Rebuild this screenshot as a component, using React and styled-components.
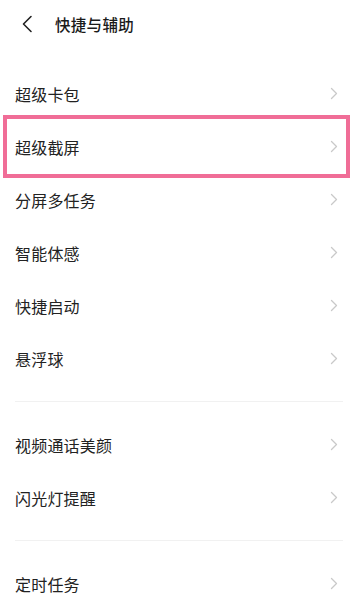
import React from 'react';
import styled, { createGlobalStyle } from 'styled-components';

const GlobalStyle = createGlobalStyle`
  html, body {
    margin: 0;
    padding: 0;
    background: #ffffff;
  }
  body {
    font-family: 'Noto Sans CJK SC', 'Noto Sans', sans-serif;
    color: #1f1f1f;
  }
`

const Page = styled.div`
  width: 355px;
  height: 600px;
  overflow: hidden;
  background: #fff;
`

const Header = styled.div`
  height: 48px;
  display: flex;
  align-items: center;
  padding-left: 21px;
`

const BackButton = styled.span`
  display: flex;
  align-items: center;
  width: 34px;
`

const Title = styled.h1`
  margin: 0;
  font-size: 15.5px;
  font-weight: 500;
  color: #1a1a1a;
  letter-spacing: 0.3px;
`

const List = styled.div`
  padding-top: 19px;
`

const Section = styled.div`
  display: flex;
  flex-direction: column;
`

const Divider = styled.div`
  height: 1px;
  margin: 16px 12px 16px 15px;
  background: #f1f1f1;
`

const Row = styled.div`
  position: relative;
  height: 53px;
  display: flex;
  align-items: center;
  justify-content: space-between;
  padding: 0 17px 0 15px;
`

const Label = styled.span`
  font-size: 16px;
  color: #222;
  letter-spacing: 0.2px;
`

const Highlight = styled.div`
  position: absolute;
  top: -5px;
  bottom: -5px;
  left: 3px;
  right: 5px;
  border: 4px solid #f06d97;
  pointer-events: none;
`

const Back = () => (
  <svg width="12" height="18" viewBox="0 0 12 18">
    <path d="M10 1.5 L2.5 9 L10 16.5" fill="none" stroke="#222" strokeWidth="1.6" strokeLinecap="round" strokeLinejoin="round" />
  </svg>
)

const Chevron = () => (
  <svg width="8" height="13" viewBox="0 0 8 13">
    <path d="M1.5 1.5 L6.5 6.5 L1.5 11.5" fill="none" stroke="#c9c9c9" strokeWidth="1.3" strokeLinecap="round" strokeLinejoin="round" />
  </svg>
)

const sections = [
  ['超级卡包', '超级截屏', '分屏多任务', '智能体感', '快捷启动', '悬浮球'],
  ['视频通话美颜', '闪光灯提醒'],
  ['定时任务'],
]

const App = () => {
  return (
    <Page>
      <GlobalStyle />
      <Header>
        <BackButton><Back /></BackButton>
        <Title>快捷与辅助</Title>
      </Header>
      <List>
        { sections.map((items, i) => (
          <React.Fragment key={ i }>
            { i > 0 && <Divider /> }
            <Section>
              { items.map(item => (
                <Row key={ item }>
                  <Label>{ item }</Label>
                  <Chevron />
                  { item === '超级截屏' && <Highlight /> }
                </Row>
              )) }
            </Section>
          </React.Fragment>
        )) }
      </List>
    </Page>
  )
}

export default App
